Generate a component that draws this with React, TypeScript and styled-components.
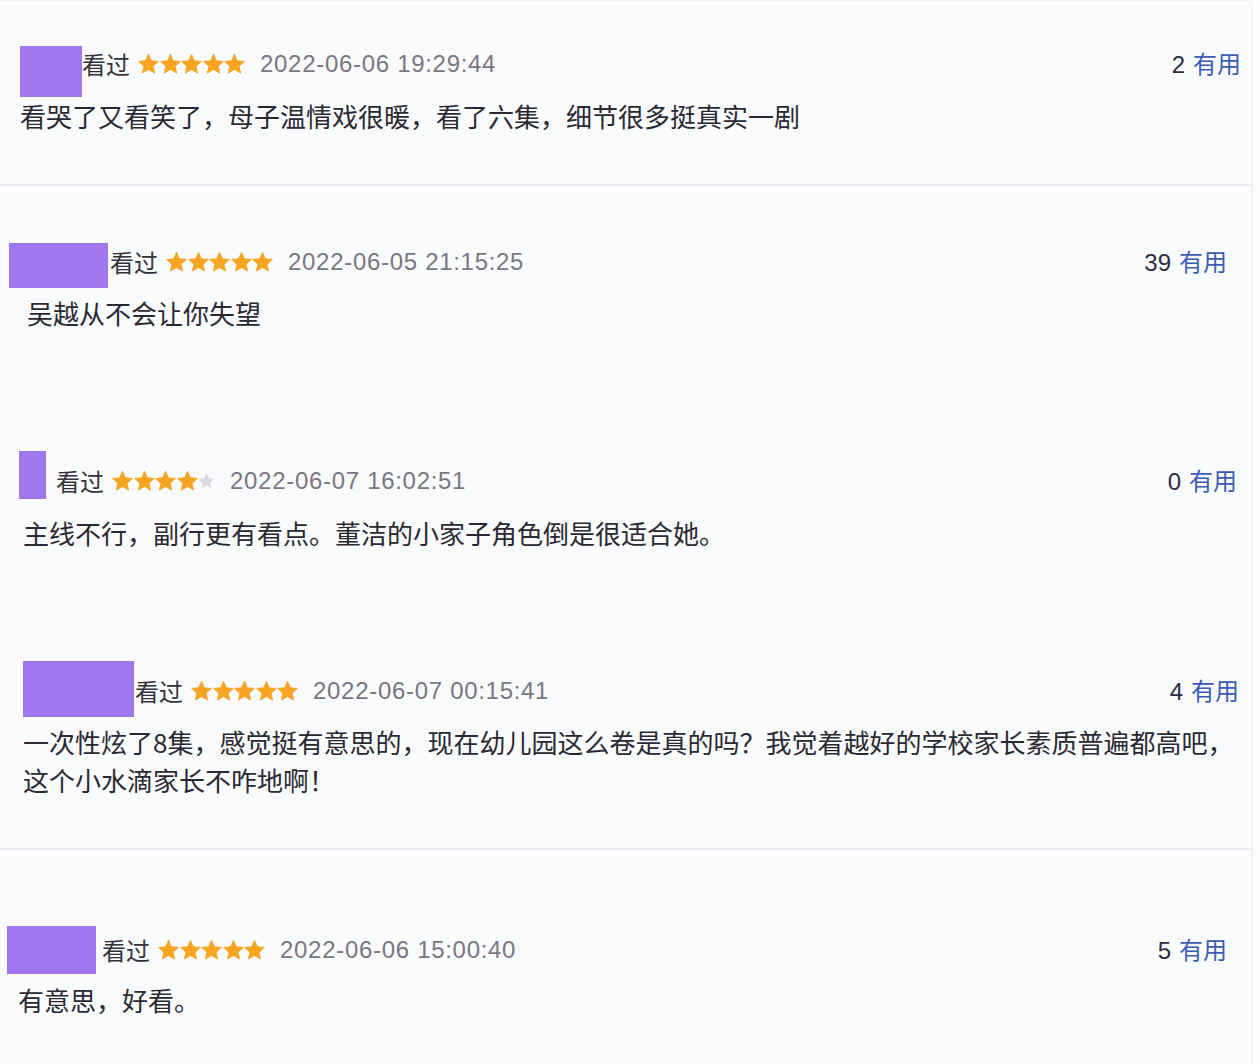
import React from 'react';
import styled, { createGlobalStyle } from 'styled-components';

const GlobalStyle = createGlobalStyle`
  html, body {
    margin: 0;
    padding: 0;
    background: #fdfdfe;
  }
  body {
    font-family: 'Noto Sans CJK SC', 'Noto Sans', sans-serif;
    color: #2b2a33;
  }
`;

const Page = styled.div`
  width: 1253px;
  height: 1064px;
  overflow: hidden;
  background-color: #fafbfd;
  border-right: 1px solid #eceef2;
  border-top: 1px solid #f0f1f4;
  box-sizing: border-box;
`;

const Card = styled.div<{ $h: number; $pt: number; $pl: number; $pr: number; $line?: boolean }>`
  height: ${(p) => p.$h}px;
  box-sizing: border-box;
  padding: ${(p) => p.$pt}px ${(p) => p.$pr}px 0 ${(p) => p.$pl}px;
  border-bottom: ${(p) => (p.$line ? '2px solid #e9ebf0' : 'none')};
  display: flex;
  flex-direction: column;
`;

const Header = styled.div`
  display: flex;
  align-items: flex-start;
`;

const Avatar = styled.div<{ $w: number; $h: number }>`
  width: ${(p) => p.$w}px;
  height: ${(p) => p.$h}px;
  background-color: #9e78ec;
  flex-shrink: 0;
`;

const Meta = styled.div<{ $mt: number; $gap: number }>`
  flex: 1;
  display: flex;
  align-items: center;
  height: 30px;
  margin-top: ${(p) => p.$mt}px;
  margin-left: ${(p) => p.$gap}px;
`;

const Seen = styled.span`
  font-size: 24px;
  color: #33323a;
  line-height: 30px;
`;

const Stars = styled.span`
  display: inline-flex;
  align-items: center;
  gap: 0.5px;
  margin-left: 8px;
  margin-right: 15px;
`;

const Date = styled.span`
  font-family: 'Liberation Sans', Arial, sans-serif;
  font-size: 24px;
  color: #7a7682;
  letter-spacing: 0.7px;
`;

const Useful = styled.span`
  margin-left: auto;
  font-size: 24px;
  line-height: 30px;
  color: #2f2b45;
`;

const Num = styled.span`
  font-family: 'Liberation Sans', Arial, sans-serif;
  margin-right: 8px;
`;

const Link = styled.span`
  color: #3b5bb4;
`;

const Comment = styled.div<{ $mt: number; $ml: number }>`
  margin-top: ${(p) => p.$mt}px;
  margin-left: ${(p) => p.$ml}px;
  font-size: 26px;
  line-height: 38px;
  color: #2a2933;
  white-space: pre-line;
`;

const starPath =
  'M12 0 L15.29 7.47 L23.41 8.29 L17.33 13.73 L19.05 21.71 L12 17.6 L4.95 21.71 L6.67 13.73 L0.59 8.29 L8.71 7.47 Z';

const Star = ({ on }: { on: boolean }) =>
  on ? (
    <svg width="21" height="20" viewBox="0 0 24 22.5">
      <path d={starPath} fill="#f7a520" stroke="#f2a11c" strokeWidth="0.8" strokeLinejoin="round" />
    </svg>
  ) : (
    <svg width="17" height="16" viewBox="0 0 24 22.5">
      <path d={starPath} fill="#d9dbe0" />
    </svg>
  );

type Review = {
  h: number;
  pt: number;
  pl: number;
  pr: number;
  line?: boolean;
  aw: number;
  ah: number;
  metaTop: number;
  metaGap: number;
  stars: number;
  date: string;
  useful: number;
  cTop: number;
  cLeft: number;
  text: string;
};

const reviews: Review[] = [
  {
    h: 185, pt: 45, pl: 20, pr: 11, line: true, aw: 62, ah: 51, metaTop: 3, metaGap: 0,
    stars: 5, date: '2022-06-06 19:29:44', useful: 2, cTop: 0, cLeft: 0,
    text: '看哭了又看笑了，母子温情戏很暖，看了六集，细节很多挺真实一剧',
  },
  {
    h: 244, pt: 57, pl: 9, pr: 25, aw: 99, ah: 45, metaTop: 4, metaGap: 2,
    stars: 5, date: '2022-06-05 21:15:25', useful: 39, cTop: 6, cLeft: 18,
    text: '吴越从不会让你失望',
  },
  {
    h: 210, pt: 21, pl: 19, pr: 15, aw: 27, ah: 48, metaTop: 15, metaGap: 10,
    stars: 4, date: '2022-06-07 16:02:51', useful: 0, cTop: 15, cLeft: 4,
    text: '主线不行，副行更有看点。董洁的小家子角色倒是很适合她。',
  },
  {
    h: 210, pt: 21, pl: 23, pr: 13, line: true, aw: 111, ah: 56, metaTop: 15, metaGap: 1,
    stars: 5, date: '2022-06-07 00:15:41', useful: 4, cTop: 6, cLeft: 0,
    text: '一次性炫了8集，感觉挺有意思的，现在幼儿园这么卷是真的吗？我觉着越好的学校家长素质普遍都高吧，\n这个小水滴家长不咋地啊！',
  },
  {
    h: 214, pt: 76, pl: 7, pr: 25, aw: 89, ah: 48, metaTop: 9, metaGap: 6,
    stars: 5, date: '2022-06-06 15:00:40', useful: 5, cTop: 7, cLeft: 11,
    text: '有意思，好看。',
  },
];

const App: React.FC = () => {
  return (
    <>
      <GlobalStyle />
      <Page>
        {reviews.map((r) => (
          <Card key={r.date} $h={r.h} $pt={r.pt} $pl={r.pl} $pr={r.pr} $line={r.line}>
            <Header>
              <Avatar $w={r.aw} $h={r.ah} />
              <Meta $mt={r.metaTop} $gap={r.metaGap}>
                <Seen>看过</Seen>
                <Stars>
                  {[0, 1, 2, 3, 4].map((i) => (
                    <Star key={i} on={i < r.stars} />
                  ))}
                </Stars>
                <Date>{r.date}</Date>
                <Useful>
                  <Num>{r.useful}</Num>
                  <Link>有用</Link>
                </Useful>
              </Meta>
            </Header>
            <Comment $mt={r.cTop} $ml={r.cLeft}>
              {r.text}
            </Comment>
          </Card>
        ))}
      </Page>
    </>
  );
};

export default App;
